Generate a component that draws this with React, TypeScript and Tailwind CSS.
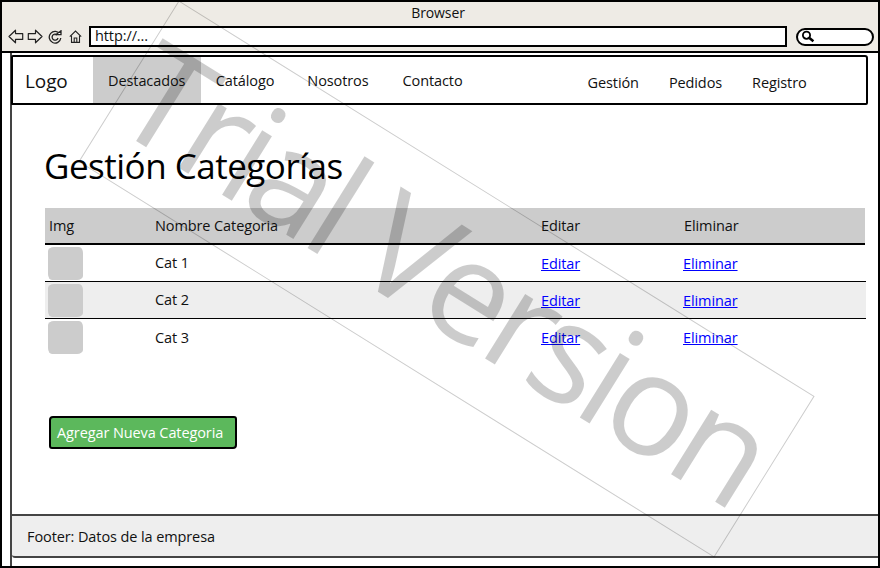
import type { ReactNode } from "react";

const rows = ["Cat 1", "Cat 2", "Cat 3"];

function BackIcon({ flip = false }: { flip?: boolean }) {
  return (
    <svg width="16" height="15" viewBox="0 0 16 15" className={flip ? "-scale-x-100" : ""} fill="none" stroke="#222" strokeWidth="1.2">
      <path d="M1 7.5 7.5 1.2v3.4h7.2v5.8H7.5v3.4z" strokeLinejoin="round" />
    </svg>
  );
}

function ReloadIcon() {
  return (
    <svg width="14" height="14" viewBox="0 0 14 14" fill="none" stroke="#222" strokeWidth="1.3">
      <path d="M12 4.2A5.8 5.8 0 1 0 12.8 8" />
      <path d="M9.2 5A3 3 0 1 0 10 8" />
      <path d="M8 4.6h5V.8z" fill="#fff" />
    </svg>
  );
}

function HomeIcon() {
  return (
    <svg width="13" height="13" viewBox="0 0 13 13" fill="none" stroke="#222" strokeWidth="1.1">
      <path d="M.8 6.6 6.5 1l5.7 5.6" />
      <path d="M2.5 5.6v6.8h8V5.6M5.2 12.4V8h2.6v4.4" />
    </svg>
  );
}

function SearchIcon() {
  return (
    <svg width="14" height="13" viewBox="0 0 14 13" fill="none" stroke="#000">
      <circle cx="5.5" cy="5.2" r="3.6" strokeWidth="1.8" />
      <path d="m8.4 8 4 3.2" strokeWidth="2.6" />
    </svg>
  );
}

function NavLink({ className, children }: { className: string; children: ReactNode }) {
  return <a className={`text-[14.5px] text-[#111] ${className}`}>{children}</a>;
}

function TableRow({ name, shaded, last }: { name: string; shaded: boolean; last: boolean }) {
  return (
    <div className={`flex h-[37px] items-center text-[14.5px] text-[#111] ${last ? "" : "border-b border-black"} ${shaded ? "bg-[#eeeeee]" : "bg-white"}`}>
      <div className="ml-[3px] h-[33px] w-[35px] rounded-[6px_4px_6px_4px/4px_6px_4px_6px] bg-[#cccccc]" />
      <div className="ml-[72px] w-[386px]">{name}</div>
      <a className="w-[142px] pt-[1px] text-[#0000ff] underline">Editar</a>
      <a className="pt-[1px] text-[#0000ff] underline">Eliminar</a>
    </div>
  );
}

export default function App() {
  return (
    <div className="relative h-[568px] w-[880px] overflow-hidden bg-white font-['Open_Sans','Noto_Sans',sans-serif] tracking-[-0.1px]">
      <header className="h-[53px] border-2 border-black bg-[#eeebe5]">
        <div className="h-[22px] pr-[4px] pt-[1px] text-center text-[14px] leading-[20px] text-[#111]">Browser</div>
        <div className="flex items-center pl-[6px] pt-[2px]">
          <BackIcon />
          <span className="w-[3px]" />
          <BackIcon flip />
          <span className="w-[5px]" />
          <ReloadIcon />
          <span className="w-[7px]" />
          <HomeIcon />
          <div className="ml-[7px] h-[21px] w-[698px] border-2 border-black bg-white pl-[4px] text-[14.5px] leading-[16px] text-[#111]">http://...</div>
          <div className="ml-[9px] flex h-[18px] w-[78px] items-center rounded-full border-2 border-black bg-white pl-[3px]">
            <SearchIcon />
          </div>
        </div>
      </header>

      <div className="flex h-[515px] flex-col border-b-2 border-l-2 border-r-2 border-black pl-[8px]">
        <div className="flex h-full flex-col border-l-2 border-[#444] pt-[2px]">
          <nav className="relative -ml-[1px] mr-[10px] flex h-[50px] items-center rounded-[2px_3px_2px_1px] border-2 border-black bg-white">
            <span className="ml-[12px] mt-[2px] text-[19px] text-[#111]">Logo</span>
            <div className="ml-[25px] flex h-full w-[108px] items-center justify-center bg-[#cccccc] pb-[1px]">
              <NavLink className="mt-[2px]">Destacados</NavLink>
            </div>
            <NavLink className="ml-[15px] mt-[2px]">Catálogo</NavLink>
            <NavLink className="ml-[33px] mt-[2px]">Nosotros</NavLink>
            <NavLink className="ml-[34px] mt-[2px]">Contacto</NavLink>
            <NavLink className="ml-[125px] mt-[5px]">Gestión</NavLink>
            <NavLink className="ml-[30px] mt-[5px]">Pedidos</NavLink>
            <NavLink className="ml-[30px] mt-[5px]">Registro</NavLink>
          </nav>

          <main className="flex-1 pl-[33px] pr-[12px]">
            <h1 className="-ml-[1px] mt-[36px] h-[50px] text-[35px] leading-[50px] tracking-[-0.5px] text-black">Gestión Categorías</h1>
            <div className="mr-[1px] mt-[17px] flex h-[37px] items-center border-b-2 border-black bg-[#cccccc] text-[14.5px] text-[#111]">
              <span className="ml-[4px] w-[106px]">Img</span>
              <span className="w-[386px]">Nombre Categoria</span>
              <span className="w-[143px]">Editar</span>
              <span>Eliminar</span>
            </div>
            {rows.map((name, i) => (
              <TableRow key={name} name={name} shaded={i === 1} last={i === rows.length - 1} />
            ))}
            <button className="ml-[4px] mt-[60px] flex h-[33px] w-[188px] items-center rounded-[4px_3px_4px_3px] border-2 border-black bg-[#5cb85c] pl-[6px] text-[14.5px] text-white">
              Agregar Nueva Categoria
            </button>
          </main>

          <footer className="mb-[8px] flex h-[44px] items-center rounded-bl-[3px] border-b-2 border-t-2 border-[#444] bg-[#eeeeee] pl-[15px] pt-[2px] text-[14.5px] text-[#111]">
            Footer: Datos de la empresa
          </footer>
        </div>
      </div>

      {/* trial watermark */}
      <div className="pointer-events-none absolute left-[72px] top-[184px] flex h-[190px] w-[749px] rotate-[31.9deg] items-center justify-center border border-black/20 text-[142px] tracking-[-7px] text-black/20">
        <span className="mb-[16px] mr-[8px] whitespace-nowrap leading-none">Trial Version</span>
      </div>
    </div>
  );
}
